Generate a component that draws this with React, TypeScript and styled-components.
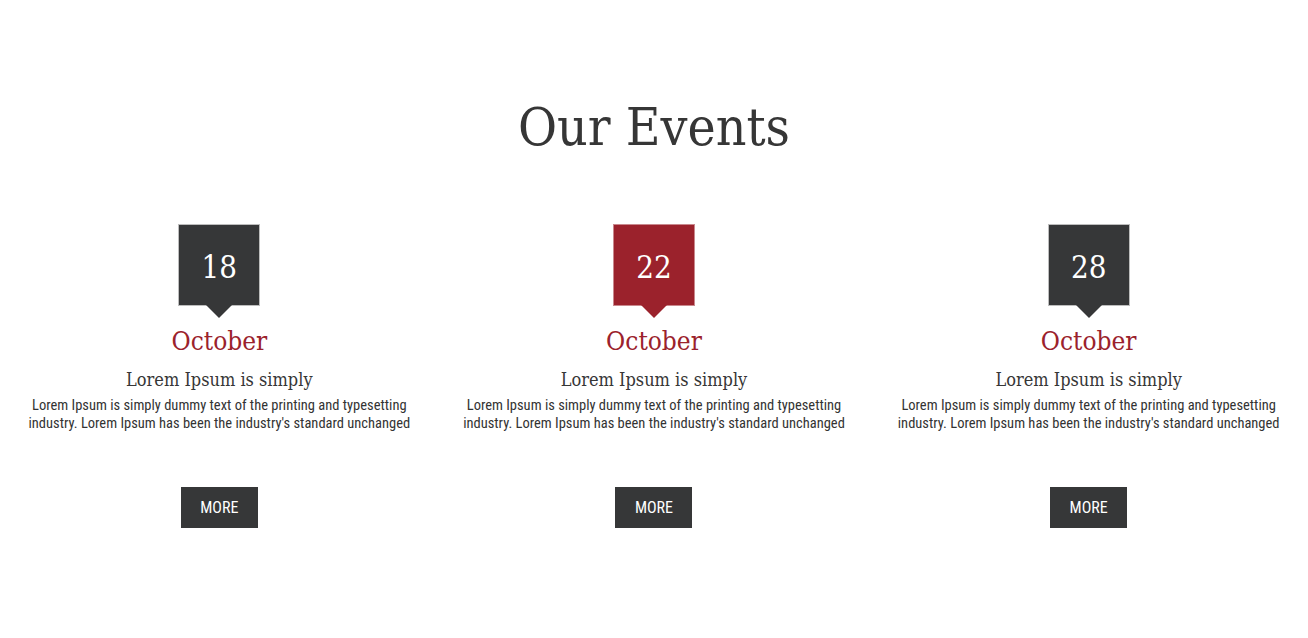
import React from "react";
import styled, { createGlobalStyle } from "styled-components";

const GlobalStyle = createGlobalStyle`
  html, body { margin: 0; padding: 0; background: #ffffff; }
  * { box-sizing: border-box; }
`;

const SLAB = "'DejaVu Serif Condensed', 'DejaVu Serif', serif";
const COND = "'Roboto Condensed', Roboto, sans-serif";

const Section = styled.section`
  width: 1308px;
  padding: 97px 2px 110px;
`;

const Title = styled.h2`
  margin: 0;
  font-family: ${SLAB};
  font-weight: normal;
  font-size: 53px;
  line-height: 60px;
  color: #363636;
  text-align: center;
`;

const Grid = styled.div`
  display: grid;
  grid-template-columns: repeat(3, 1fr);
  margin-top: 67px;
`;

const Card = styled.article`
  display: flex;
  flex-direction: column;
  align-items: center;
  padding: 0 15px;
  text-align: center;
`;

const DateBox = styled.div<{ $accent?: boolean }>`
  position: relative;
  width: 82px;
  height: 82px;
  display: flex;
  align-items: center;
  justify-content: center;
  padding-top: 5px;
  background: ${(p) => (p.$accent ? "#9b222c" : "#363738")};
  border: 1px solid ${(p) => (p.$accent ? "#c9888d" : "#bdbdbd")};
  color: #ffffff;
  font-family: ${SLAB};
  font-size: 31px;
  line-height: 1;
  &::after {
    content: "";
    position: absolute;
    left: 50%;
    top: 100%;
    margin-left: -13px;
    border-left: 13px solid transparent;
    border-right: 13px solid transparent;
    border-top: 13px solid ${(p) => (p.$accent ? "#9b222c" : "#363738")};
  }
`;

const Month = styled.div`
  margin-top: 20px;
  font-family: ${SLAB};
  font-size: 26px;
  line-height: 30px;
  color: #9b222c;
`;

const Heading = styled.h3`
  margin: 12px 0 0;
  font-family: ${SLAB};
  font-weight: normal;
  font-size: 18px;
  line-height: 24px;
  color: #363636;
`;

const Text = styled.p`
  margin: 4.5px 0 0;
  font-family: ${COND};
  font-size: 14.5px;
  line-height: 18.5px;
  color: #333333;
`;

const MoreButton = styled.button`
  margin-top: 53px;
  width: 77px;
  height: 41px;
  border: none;
  background: #363738;
  color: #ffffff;
  font-family: ${COND};
  font-size: 16px;
  font-weight: 400;
  text-transform: uppercase;
  cursor: pointer;
  padding: 0;
`;

const events = [
  { day: "18", accent: false },
  { day: "22", accent: true },
  { day: "28", accent: false },
];

export default function App() {
  return (
    <>
      <GlobalStyle />
      <Section>
        <Title>Our Events</Title>
        <Grid>
          {events.map((e) => (
            <Card key={e.day}>
              <DateBox $accent={e.accent}>{e.day}</DateBox>
              <Month>October</Month>
              <Heading>Lorem Ipsum is simply</Heading>
              <Text>
                Lorem Ipsum is simply dummy text of the printing and typesetting industry. Lorem Ipsum has been the
                industry's standard unchanged
              </Text>
              <MoreButton>More</MoreButton>
            </Card>
          ))}
        </Grid>
      </Section>
    </>
  );
}
